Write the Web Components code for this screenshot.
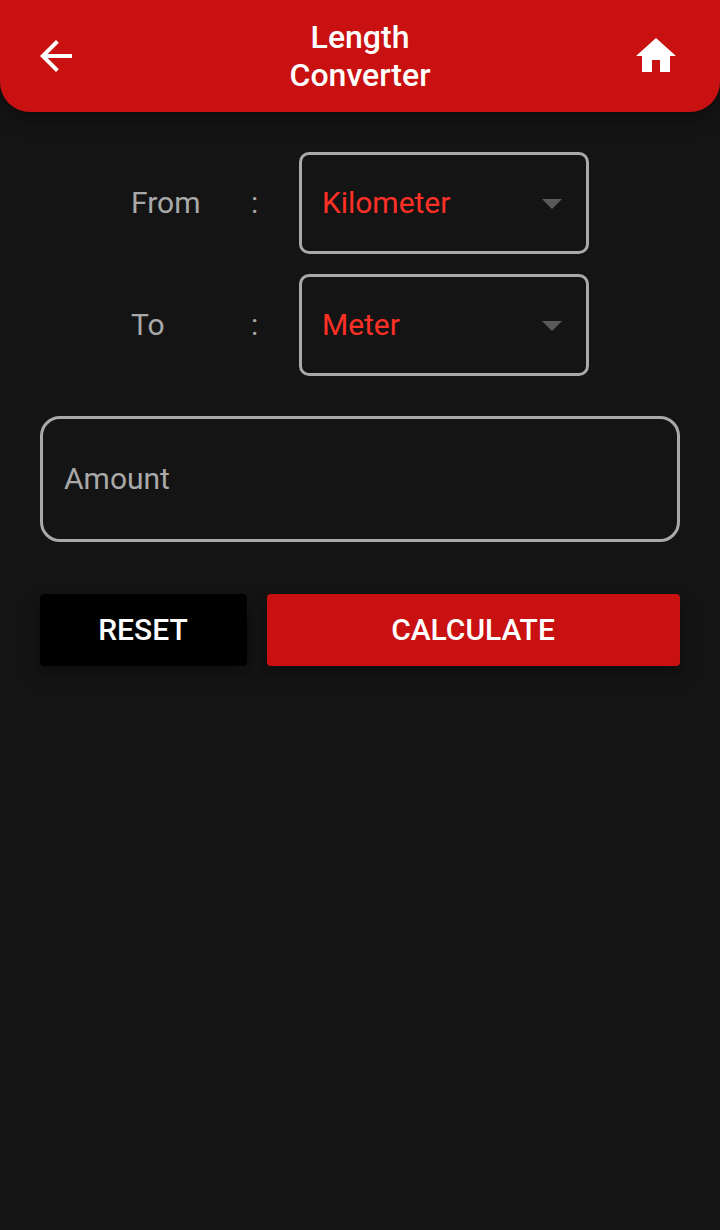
<!DOCTYPE html>
<html lang="en">
<head>
<meta charset="utf-8">
<title>Length Converter</title>
<style>
html,body{margin:0;height:100%;background:#141414}
body{font-family:Roboto,"Liberation Sans",sans-serif;overflow:hidden}
</style>
</head>
<body>
<converter-app></converter-app>
<script>
const define = (name, html) => {
  const template = document.createElement('template');
  template.innerHTML = html;
  customElements.define(name, class extends HTMLElement {
    constructor() {
      super();
      this.attachShadow({mode: 'open'}).append(template.content.cloneNode(true));
    }
  });
};

define('app-header', `
<style>
:host{display:grid;grid-template-columns:112px 1fr 128px;align-items:center;height:112px;box-sizing:border-box;background:#c81110;color:#fff;border-radius:0 0 30px 30px;box-shadow:0 4px 10px rgba(0,0,0,.16),0 8px 20px rgba(0,0,0,.14)}
svg{display:block;width:48px;height:48px;fill:#fff;justify-self:center}
h1{margin:0;justify-self:center;transform:translateX(8px);width:160px;font-size:32px;font-weight:500;line-height:38px;text-align:center}
</style>
<svg viewBox="0 0 24 24"><path d="M20 11H7.83l5.59-5.59L12 4l-8 8 8 8 1.41-1.41L7.83 13H20z"/></svg>
<h1><slot></slot></h1>
<svg viewBox="0 0 24 24"><path d="M10 20v-6h4v6h5v-8h3L12 3 2 12h3v8z"/></svg>
`);

define('unit-select', `
<style>
:host{display:flex;align-items:center;justify-content:space-between;box-sizing:border-box;width:290px;height:102px;border:3px solid #a9a9a9;border-radius:10px;padding:0 10px 0 20px;color:#ff3126;font-size:30px;line-height:36px}
span{letter-spacing:-.04px}
svg{display:block;width:48px;height:48px;fill:#5a5a5a}
</style>
<span><slot></slot></span>
<svg viewBox="0 0 24 24"><path d="M7 10l5 5 5-5z"/></svg>
`);

define('unit-row', `
<style>
:host{display:grid;grid-template-columns:120px 48px 290px;align-items:center;color:#a9a9a9;font-size:30px;line-height:36px}
</style>
<span><slot name="label"></slot></span><span>:</span><slot></slot>
`);

define('amount-field', `
<style>
:host{display:flex;align-items:center;box-sizing:border-box;height:126px;border:3px solid #a9a9a9;border-radius:20px;padding:0 21px;color:#a9a9a9;font-size:30px;line-height:36px}
</style>
<span><slot></slot></span>
`);

define('app-button', `
<style>
:host{display:flex;align-items:center;justify-content:center;box-sizing:border-box;height:72px;padding-right:1px;border-radius:4px;background:var(--fill);color:#fff;font-size:30px;font-weight:500;line-height:36px;box-shadow:0 4px 8px rgba(0,0,0,.06),0 10px 20px rgba(0,0,0,.22)}
</style>
<span><slot></slot></span>
`);

define('converter-app', `
<style>
:host{display:block;height:1230px;background:#141414}
main{padding:40px 40px 0}
.units{display:grid;gap:20px;padding-left:91px}
amount-field{margin-top:40px}
.actions{display:grid;grid-template-columns:207px 413px;gap:20px;margin-top:52px}
.reset{--fill:#000}
.calc{--fill:#c81110}
</style>
<app-header>Length Converter</app-header>
<main>
  <div class="units">
    <unit-row><span slot="label">From</span><unit-select>Kilometer</unit-select></unit-row>
    <unit-row><span slot="label">To</span><unit-select>Meter</unit-select></unit-row>
  </div>
  <amount-field>Amount</amount-field>
  <div class="actions">
    <app-button class="reset">RESET</app-button>
    <app-button class="calc">CALCULATE</app-button>
  </div>
</main>
`);
</script>
</body>
</html>
